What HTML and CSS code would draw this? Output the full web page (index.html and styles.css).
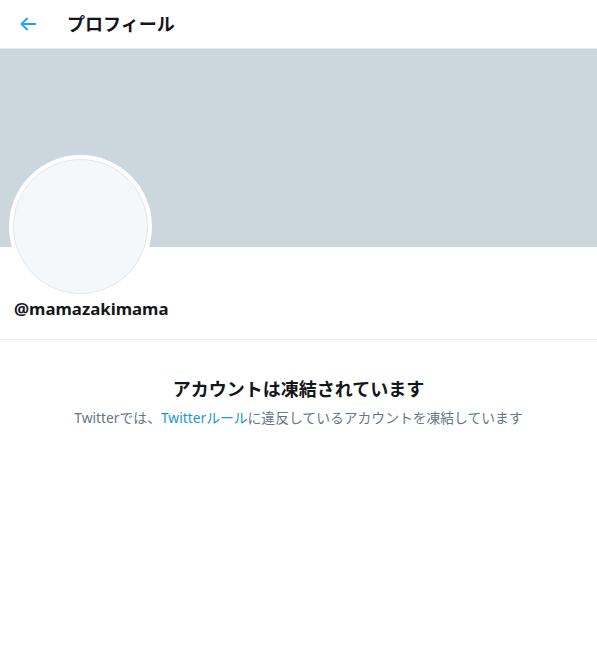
FILE: index.html
```html
<!DOCTYPE html>
<html lang="ja">
<head>
<meta charset="utf-8">
<title>プロフィール</title>
<link rel="stylesheet" href="styles.css">
</head>
<body>
<div class="page">
  <header class="topbar">
    <a class="back" href="#" aria-label="戻る">
      <svg viewBox="0 0 24 24" width="22" height="22"><path d="M20 11H7.414l4.293-4.293a1 1 0 0 0-1.414-1.414l-6 6a1 1 0 0 0 0 1.414l6 6a1 1 0 0 0 1.414-1.414L7.414 13H20a1 1 0 0 0 0-2z"/></svg>
    </a>
    <h1 class="title">プロフィール</h1>
  </header>
  <div class="banner"></div>
  <div class="profile">
    <div class="avatar-wrap">
      <div class="avatar"></div>
    </div>
    <div class="handle">@mamazakimama</div>
  </div>
  <section class="suspended">
    <h2 class="s-title">アカウントは凍結されています</h2>
    <p class="s-text">Twitterでは、<a href="#" class="link">Twitterルール</a>に違反しているアカウントを凍結しています</p>
  </section>
</div>
</body>
</html>
```

FILE: styles.css
```css
html, body {
  margin: 0;
  padding: 0;
  background: #ffffff;
}
body {
  font-family: "Segoe UI", "Noto Sans", "Noto Sans CJK JP", sans-serif;
  color: #14171a;
}
.page {
  width: 597px;
}
.topbar {
  height: 48px;
  display: flex;
  align-items: center;
  border-bottom: 1px solid #e6ecf0;
  box-sizing: content-box;
}
.back {
  width: 22px;
  height: 22px;
  margin-left: 17px;
  display: flex;
  align-items: center;
  justify-content: center;
  color: #1da1f2;
}
.back svg {
  fill: #1da1f2;
}
.title {
  margin: 0 0 3px 28px;
  font-size: 18px;
  font-weight: 700;
  line-height: 24px;
  font-family: "Noto Sans CJK JP", sans-serif;
  color: #14171a;
}
.banner {
  height: 198px;
  background: #ccd6dd;
}
.profile {
  padding: 0 14px;
  border-bottom: 1px solid #e6ecf0;
  height: 92px;
  position: relative;
}
.avatar-wrap {
  position: absolute;
  left: 9px;
  top: -92px;
  width: 143px;
  height: 143px;
  border-radius: 50%;
  background: #ffffff;
  display: flex;
  align-items: center;
  justify-content: center;
}
.avatar {
  width: 133px;
  height: 133px;
  border-radius: 50%;
  background: #f5f8fa;
  border: 1px solid #e1e8ed;
}
.handle {
  padding-top: 51px;
  font-size: 16.8px;
  font-weight: 700;
  line-height: 22px;
  font-family: "Noto Sans", sans-serif;
  color: #14171a;
}
.suspended {
  text-align: center;
  padding-top: 35px;
}
.s-title {
  margin: 0;
  font-size: 18px;
  font-weight: 700;
  line-height: 26px;
  font-family: "Noto Sans CJK JP", sans-serif;
  color: #14171a;
}
.s-text {
  margin: 7px 0 0;
  font-size: 13.8px;
  line-height: 20px;
  color: #657786;
  font-family: "Noto Sans", "Noto Sans CJK JP", sans-serif;
}
.link {
  color: #1b95e0;
  text-decoration: none;
}
```
